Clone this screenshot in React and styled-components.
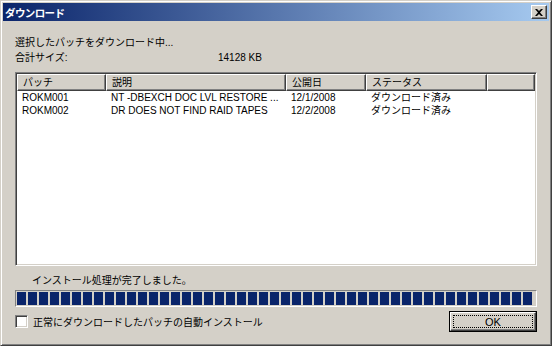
import styled, { createGlobalStyle } from "styled-components";

const GlobalStyle = createGlobalStyle`
  html, body {
    margin: 0;
    padding: 0;
    background: #d4d0c8;
  }
  body {
    font-family: "Liberation Sans", "Noto Sans CJK JP", sans-serif;
    font-size: 10px;
    color: #000;
  }
`;

const columns = [
  { title: "パッチ", width: 89 },
  { title: "説明", width: 180 },
  { title: "公開日", width: 80 },
  { title: "ステータス", width: 121 },
  { title: "", width: 48 },
];

const rows = [
  ["ROKM001", "NT -DBEXCH DOC LVL RESTORE ...", "12/1/2008", "ダウンロード済み"],
  ["ROKM002", "DR DOES NOT FIND RAID TAPES", "12/2/2008", "ダウンロード済み"],
];

const gridCols = columns.map((c) => `${c.width}px`).join(" ");

const Window = styled.div`
  box-sizing: border-box;
  width: 552px;
  height: 346px;
  display: flex;
  flex-direction: column;
  padding: 1px;
  background: #d4d0c8;
  border: 1px solid;
  border-color: #d4d0c8 #404040 #404040 #d4d0c8;
  box-shadow: inset 1px 1px 0 #fff, inset -1px -1px 0 #808080;
`;

const TitleBar = styled.div`
  height: 18px;
  margin: 1px 1px 0 1px;
  display: flex;
  align-items: center;
  justify-content: space-between;
  padding: 0 2px 0 2px;
  background: linear-gradient(to right, #0a246a, #a6caf0);
`;

const TitleText = styled.span`
  color: #fff;
  font-weight: bold;
  font-size: 10.5px;
  font-family: "Noto Sans CJK JP", sans-serif;
  letter-spacing: -0.6px;
`;

const CloseButton = styled.div`
  box-sizing: border-box;
  width: 16px;
  height: 14px;
  display: flex;
  align-items: center;
  justify-content: center;
  background: #d4d0c8;
  border: 1px solid;
  border-color: #fff #404040 #404040 #fff;
  box-shadow: inset -1px -1px 0 #808080;
`;

const Content = styled.div`
  flex: 1;
  display: flex;
  flex-direction: column;
  padding: 14px 13px 0 13px;
`;

const InfoLine = styled.div`
  height: 15px;
  line-height: 15px;
  display: flex;
`;

const InfoLabel = styled.span`
  width: 203px;
`;

const ListBox = styled.div`
  box-sizing: border-box;
  margin-top: 7px;
  height: 194px;
  background: #fff;
  border: 1px solid;
  border-color: #808080 #fff #fff #808080;
  box-shadow: inset 1px 1px 0 #404040, inset -1px -1px 0 #d4d0c8;
  padding: 1px;
  overflow: hidden;
`;

const Row = styled.div`
  display: grid;
  grid-template-columns: ${gridCols};
`;

const HeaderCell = styled.div`
  box-sizing: border-box;
  height: 17px;
  line-height: 15px;
  padding-left: 5px;
  background: #d4d0c8;
  border: 1px solid;
  border-color: #fff #404040 #404040 #fff;
  box-shadow: inset -1px -1px 0 #808080;
  white-space: nowrap;
  overflow: hidden;
`;

const Cell = styled.div`
  height: 13px;
  line-height: 13px;
  padding-left: 5px;
  white-space: nowrap;
  overflow: hidden;
`;

const Status = styled.div`
  margin-top: 8px;
  padding-left: 17px;
  height: 14px;
  line-height: 14px;
`;

const Progress = styled.div`
  box-sizing: border-box;
  margin-top: 2px;
  height: 17px;
  padding: 1px;
  border: 1px solid;
  border-color: #808080 #fff #fff #808080;
`;

const ProgressFill = styled.div`
  height: 100%;
  width: ${(p) => p.$blocks * 11 - 2}px;
  background: repeating-linear-gradient(
    to right,
    #0a246a 0 9px,
    transparent 9px 11px
  );
`;

const Footer = styled.div`
  margin-top: 4px;
  display: flex;
  align-items: center;
  justify-content: space-between;
`;

const CheckLabel = styled.label`
  display: flex;
  align-items: center;
  gap: 5px;
`;

const CheckBox = styled.span`
  box-sizing: border-box;
  width: 13px;
  height: 13px;
  background: #fff;
  border: 1px solid;
  border-color: #808080 #fff #fff #808080;
  box-shadow: inset 1px 1px 0 #404040, inset -1px -1px 0 #d4d0c8;
`;

const OkButton = styled.button`
  box-sizing: border-box;
  width: 88px;
  height: 21px;
  padding: 0;
  background: #d4d0c8;
  border: 1px solid #000;
  font: inherit;
  font-size: 11px;
  display: flex;
  align-items: stretch;
`;

const OkInner = styled.span`
  flex: 1;
  display: flex;
  border: 1px solid;
  border-color: #fff #404040 #404040 #fff;
  box-shadow: inset -1px -1px 0 #808080;
  padding: 2px;
`;

const FocusRing = styled.span`
  flex: 1;
  display: flex;
  align-items: center;
  justify-content: center;
  border: 1px dotted #000;
`;

export default function App() {
  return (
    <>
      <GlobalStyle />
      <Window>
        <TitleBar>
          <TitleText>ダウンロード</TitleText>
          <CloseButton>
            <svg width="8" height="7" viewBox="0 0 8 7">
              <path d="M0 0h2l2 2 2-2h2L5 3.5 8 7H6L4 5 2 7H0l3-3.5z" fill="#000" />
            </svg>
          </CloseButton>
        </TitleBar>
        <Content>
          <InfoLine>選択したパッチをダウンロード中...</InfoLine>
          <InfoLine>
            <InfoLabel>合計サイズ:</InfoLabel>
            <span>14128 KB</span>
          </InfoLine>
          <ListBox>
            <Row>
              {columns.map((c, i) => (
                <HeaderCell key={i}>{c.title}</HeaderCell>
              ))}
            </Row>
            {rows.map((r, i) => (
              <Row key={i}>
                {r.map((v, j) => (
                  <Cell key={j}>{v}</Cell>
                ))}
                <Cell />
              </Row>
            ))}
          </ListBox>
          <Status>インストール処理が完了しました。</Status>
          <Progress>
            <ProgressFill $blocks={47} />
          </Progress>
          <Footer>
            <CheckLabel>
              <CheckBox />
              正常にダウンロードしたパッチの自動インストール
            </CheckLabel>
            <OkButton>
              <OkInner>
                <FocusRing>OK</FocusRing>
              </OkInner>
            </OkButton>
          </Footer>
        </Content>
      </Window>
    </>
  );
}
